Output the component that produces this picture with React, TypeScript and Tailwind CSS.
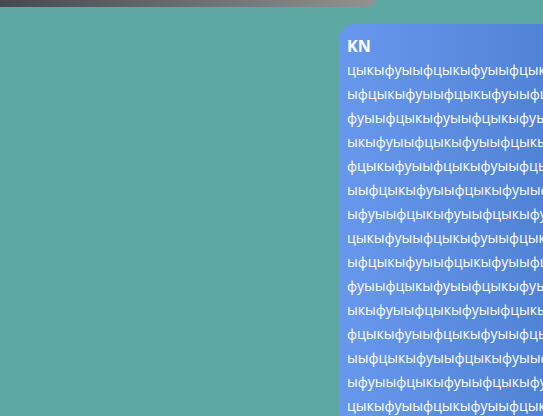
import React from 'react';

const message = 'цыкыфуыыф'.repeat(48);

export default function App() {
  return (
    <div className="h-screen w-full overflow-hidden bg-[#5da8a2] font-['Open_Sans',sans-serif]">
      <div className="h-[7px] w-[375px] rounded-br-[10px] bg-gradient-to-r from-[#48494e] to-[#929294]" />

      <div className="flex pt-[17px] pl-[339px]">
        <div className="w-[256px] shrink-0 rounded-tl-[16px] rounded-tr-[16px] bg-gradient-to-r from-[#6898ee] to-[#4a7dcf] px-2 pt-[10px] pb-3 text-white">
          <div className="text-[16px] leading-[24px] font-bold">KN</div>
          <p className="text-[14px] leading-[24px] break-all">{message}</p>
        </div>
      </div>
    </div>
  );
}
